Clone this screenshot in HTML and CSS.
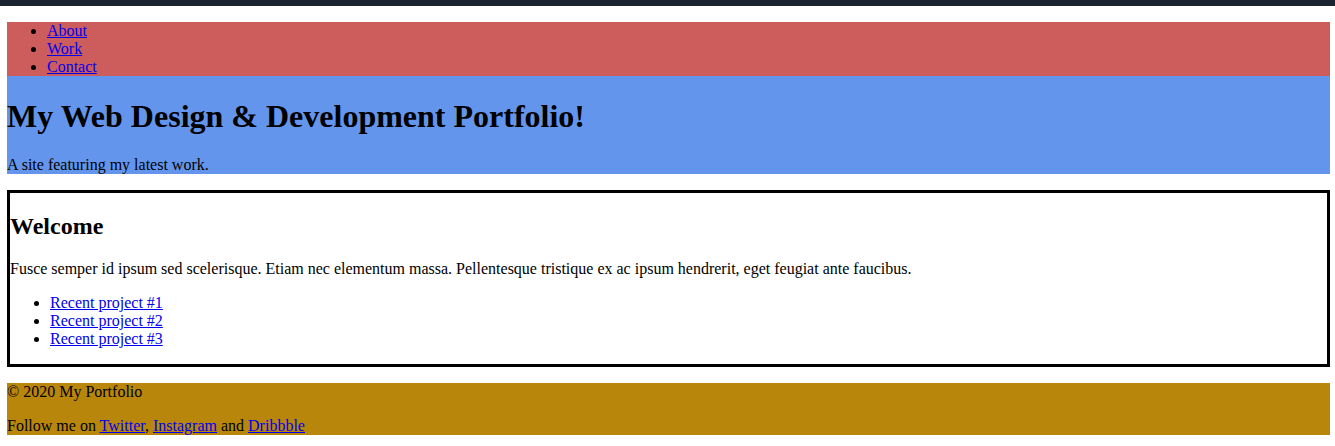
FILE: index.html
```html
<!DOCTYPE html>
<html lang="en">
<head>
<meta charset="utf-8">
<title>My Portfolio</title>
<link rel="stylesheet" href="styles.css">
</head>
<body class="page">
<div class="topbar"></div>
<div class="content">
<header class="header">
<nav class="nav">
<ul class="list">
<li><a href="#about">About</a></li>
<li><a href="#work">Work</a></li>
<li><a href="#contact">Contact</a></li>
</ul>
</nav>
<h1 class="title">My Web Design &amp; Development Portfolio!</h1>
<p class="tagline">A site featuring my latest work.</p>
</header>
<main class="main">
<h2 class="subtitle">Welcome</h2>
<p class="intro">Fusce semper id ipsum sed scelerisque. Etiam nec elementum massa. Pellentesque tristique ex ac ipsum hendrerit, eget feugiat ante faucibus.</p>
<ul class="list">
<li><a href="#project-1">Recent project #1</a></li>
<li><a href="#project-2">Recent project #2</a></li>
<li><a href="#project-3">Recent project #3</a></li>
</ul>
</main>
<footer class="footer">
<p class="copyright">© 2020 My Portfolio</p>
<p class="follow">Follow me on <a href="#twitter">Twitter</a>, <a href="#instagram">Instagram</a> and <a href="#dribbble">Dribbble</a></p>
</footer>
</div>
</body>
</html>
```
FILE: styles.css
```css
.page {
  margin: 0;
  background: #fff;
  color: #000;
  font: 16px/18px "Liberation Serif", "Times New Roman", serif;
}
.topbar {
  height: 6px;
  background: #1c2331;
}
.content {
  display: flex;
  flex-direction: column;
  gap: 16px;
  padding: 16px 5px 11px 7px;
}
.header {
  background: cornflowerblue;
}
.nav {
  background: indianred;
}
.list {
  margin: 0;
  padding-left: 40px;
}
.title {
  margin: 0;
  padding: 22px 0;
  font-size: 32px;
  line-height: 36px;
}
.tagline,
.copyright,
.follow {
  margin: 0;
}
.main {
  border: 3px solid #000;
  padding: 20px 0 16px;
}
.subtitle {
  margin: 0 0 20px;
  font-size: 24px;
  line-height: 27px;
}
.intro {
  margin: 0 0 16px;
}
.footer {
  display: grid;
  gap: 16px;
  background: darkgoldenrod;
}
a {
  color: #00e;
}
```
